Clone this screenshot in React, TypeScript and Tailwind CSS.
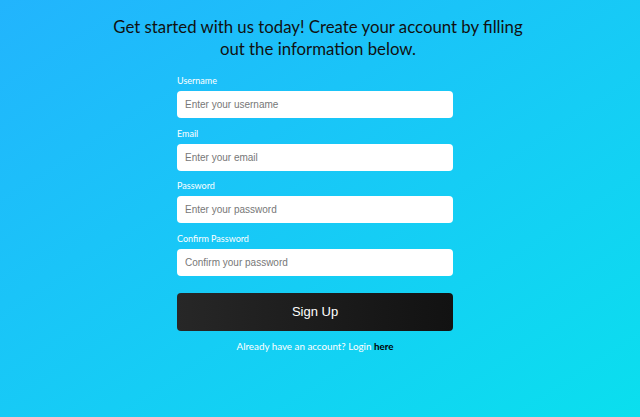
const FIELDS = [
  { label: "Username", type: "text", placeholder: "Enter your username" },
  { label: "Email", type: "email", placeholder: "Enter your email" },
  { label: "Password", type: "password", placeholder: "Enter your password" },
  { label: "Confirm Password", type: "password", placeholder: "Confirm your password" },
];

export default function App() {
  return (
    <div className="min-h-[417px] w-full bg-gradient-to-br from-[#22b4fd] to-[#0adfee] flex flex-col items-center pt-4 pr-[10px]">
      <h1 className="w-[440px] pl-[6px] text-center text-[16.8px] leading-[22px] text-[#111] font-['Lato',sans-serif]">
        Get started with us today! Create your account by filling out the information below.
      </h1>

      <form className="w-[276px] mt-[14px] flex flex-col" onSubmit={(e) => e.preventDefault()}>
        {FIELDS.map((f) => (
          <div key={f.label} className="flex flex-col mb-[8.5px]">
            <label className="text-[9px] leading-[13px] mb-[4px] text-white font-['Lato',sans-serif]">
              {f.label}
            </label>
            <input
              type={f.type}
              placeholder={f.placeholder}
              className="h-[27px] w-full rounded bg-white px-2 text-[10px] font-['Liberation_Sans',Arial,sans-serif] text-[#333] placeholder:text-[#777] outline-none"
            />
          </div>
        ))}

        <button
          type="submit"
          className="mt-[8.5px] h-[38px] w-full rounded bg-gradient-to-r from-[#272727] to-[#121212] text-white text-[13px] font-['Liberation_Sans',Arial,sans-serif]"
        >
          Sign Up
        </button>

        <p className="mt-2 text-center text-[9.8px] leading-[14px] text-white font-['Lato',sans-serif]">
          Already have an account? Login <a href="#" className="text-black font-bold">here</a>
        </p>
      </form>
    </div>
  );
}
